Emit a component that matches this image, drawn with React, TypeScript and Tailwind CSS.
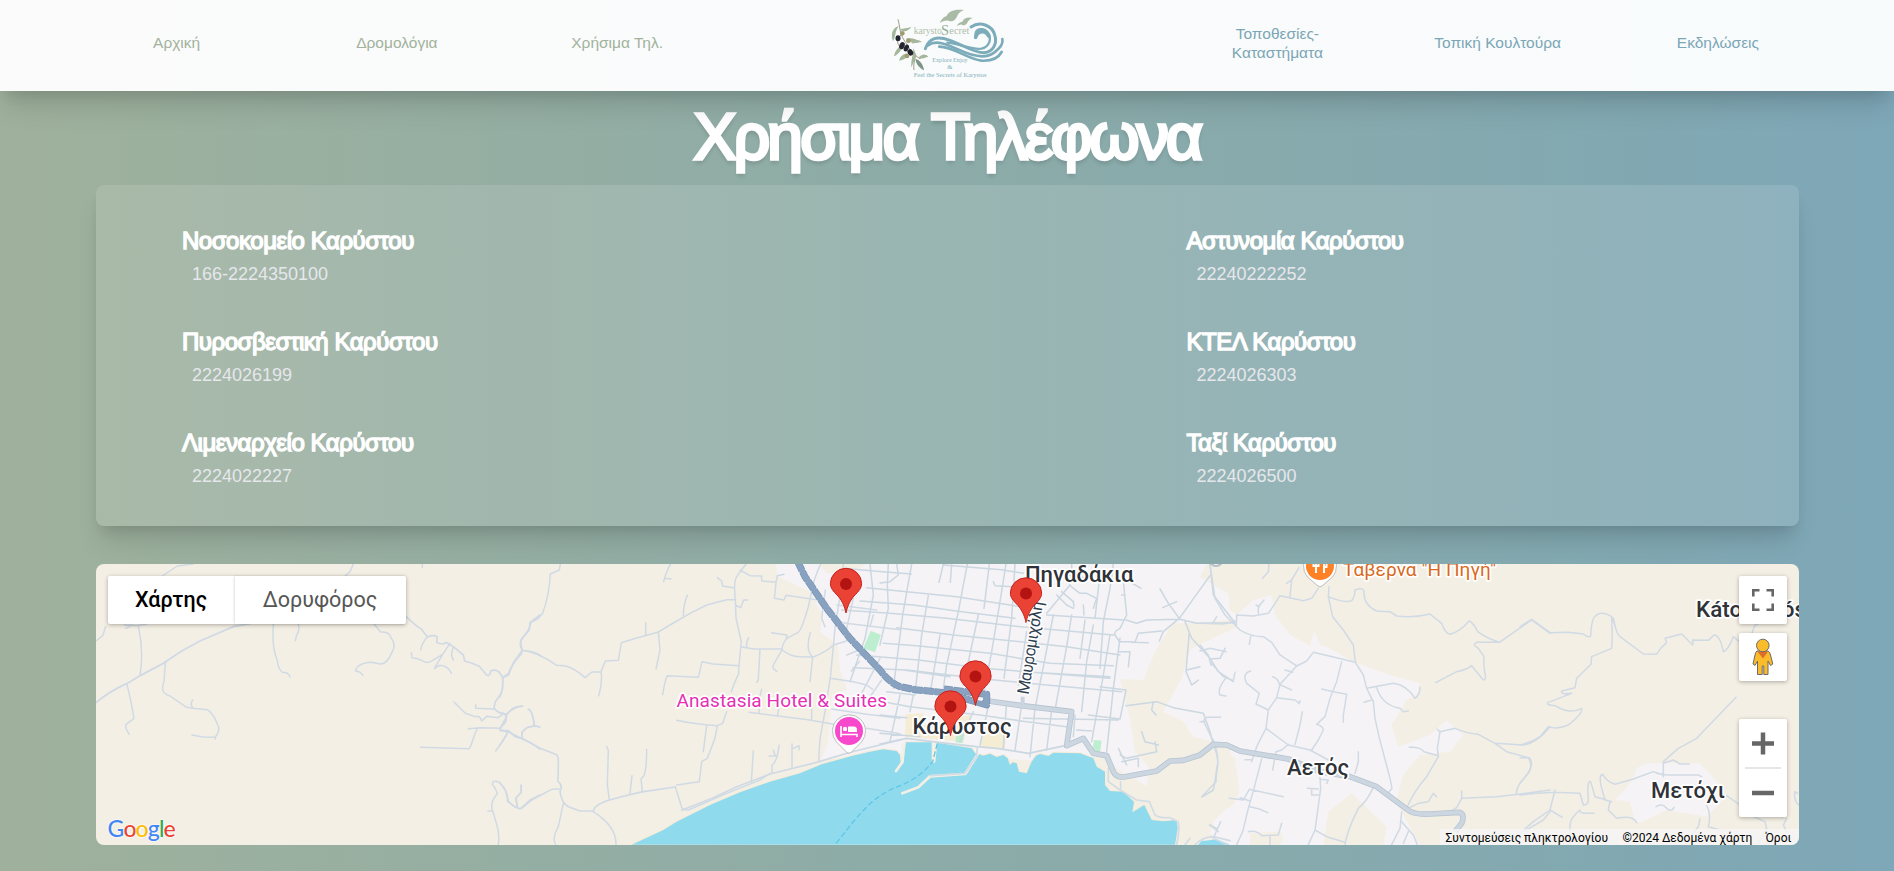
import React from "react";

const contactsLeft = [
  ["Νοσοκομείο Καρύστου", "166-2224350100"],
  ["Πυροσβεστική Καρύστου", "2224026199"],
  ["Λιμεναρχείο Καρύστου", "2224022227"],
];
const contactsRight = [
  ["Αστυνομία Καρύστου", "22240222252"],
  ["ΚΤΕΛ Καρύστου", "2224026303"],
  ["Ταξί Καρύστου", "2224026500"],
];

function Logo() {
  return (
    <svg width="150" height="91" viewBox="36 0 450 273" aria-label="Karystos Secret">
      <g fill="none" stroke="#7cacba" strokeLinecap="round">
        <path d="M196 146C208 112 232 108 270 121C312 136 340 158 372 158C402 156 412 128 404 104C396 76 360 62 333 81" strokeWidth="9" />
        <path d="M204 136C228 118 262 134 296 149C340 170 376 178 402 158C424 140 430 130 427 117" strokeWidth="8" />
        <path d="M238 140C280 140 320 176 364 182C396 184 416 172 425 156" strokeWidth="8" />
        <path d="M262 128C310 134 336 150 364 146C388 142 396 116 384 98C372 82 346 84 346 106" strokeWidth="7" />
        <path d="M347 112C352 92 376 88 386 108" strokeWidth="11" />
      </g>
      <g fill="#a9bba5">
        <path d="M239 68C246 56 252 50 260 48C264 34 284 26 312 30C300 34 294 40 290 52C284 64 274 66 266 62C256 60 248 64 239 68Z" />
        <path d="M290 78C294 70 300 66 307 65C312 54 324 50 338 54C330 57 326 61 322 68C316 76 310 77 306 74C300 73 296 76 290 78Z" />
      </g>
      <g fill="none" stroke="#8f8378" strokeWidth="2.5">
        <path d="M114 58C120 78 118 98 132 120C146 142 158 164 180 176M124 104C110 118 108 128 124 146M158 130C170 120 178 122 184 126M164 178C162 192 160 200 162 210M180 176C190 166 196 166 203 170" />
      </g>
      <g fill="#a4b79b">
        <path d="M116 78C96 84 92 104 99 124C108 108 104 96 116 78Z" />
        <path d="M118 88C132 84 142 86 154 80C144 94 132 98 118 88Z" />
        <path d="M140 116C154 112 168 116 182 126C166 132 150 130 140 116Z" />
        <path d="M128 134C114 140 104 154 102 169C116 162 126 150 128 134Z" />
        <path d="M142 160C126 162 118 174 118 182C132 180 142 174 142 160Z" />
        <path d="M160 144L170 168L154 202C152 182 160 164 160 144Z" />
        <path d="M166 176C180 180 190 194 192 211C178 204 168 192 166 176Z" fill="#7c9584" />
        <path d="M176 172C188 160 196 162 204 169C194 176 186 178 176 172Z" />
      </g>
      <g fill="#24242e">
        <ellipse cx="114" cy="115" rx="7.500" ry="9" />
        <ellipse cx="126" cy="137" rx="8" ry="11" transform="rotate(20 126 137)" />
        <ellipse cx="139" cy="144" rx="7" ry="11" transform="rotate(25 139 144)" />
        <ellipse cx="151" cy="157" rx="8" ry="10" transform="rotate(-30 151 157)" />
      </g>
      <g fill="#a09a70">
        <circle cx="127" cy="100" r="7" />
        <circle cx="145" cy="122" r="7" />
        <circle cx="141" cy="168" r="7" />
      </g>
      <g fontFamily="'Liberation Serif', serif">
        <text x="161" y="101" fontSize="28" fill="#aebdaa" textLength="84" lengthAdjust="spacingAndGlyphs">karysto</text>
        <text x="243" y="105" fontSize="46" fill="#8fae97" textLength="24" lengthAdjust="spacingAndGlyphs">S</text>
        <text x="268" y="101" fontSize="28" fill="#aebdaa" textLength="60" lengthAdjust="spacingAndGlyphs">ecret</text>
        <g fill="#82b0bd" fontSize="20">
          <text x="217" y="187" textLength="106" lengthAdjust="spacingAndGlyphs">Explore Enjoy</text>
          <text x="262" y="207">&amp;</text>
          <text x="161" y="230" textLength="219" lengthAdjust="spacingAndGlyphs">Feel the Secrets of Karystos</text>
        </g>
      </g>
    </svg>
  );
}

function Pin({ x, y }: { x: number; y: number }) {
  return (
    <g transform={`translate(${x} ${y})`}>
      <path
        d="M0 0C-1.2 -5.5 -3 -11 -8 -17C-13 -22 -15.6 -25 -15.6 -29.5A15.6 15.2 0 0 1 15.6 -29.5C15.6 -25 13 -22 8 -17C3 -11 1.2 -5.5 0 0Z"
        fill="#ea4335"
        stroke="#c5221f"
        strokeWidth="1"
      />
      <circle cx="0" cy="-29" r="6" fill="#b31412" />
    </g>
  );
}

function Label({ x, y, w, children }: { x: number; y: number; w: number; children: React.ReactNode }) {
  return (
    <text x={x} y={y} textLength={w} lengthAdjust="spacingAndGlyphs" fontSize="22" fontWeight="500" fill="#2f3237" stroke="#fff" strokeWidth="3.5" strokeLinejoin="round" paintOrder="stroke">
      {children}
    </text>
  );
}

const mainRoad =
  "M325 438L425 452L575 470L560 572L610 550L640 595L680 602L700 650Q710 670 735 665L830 648L870 618L910 616L960 600L1000 568L1040 570L1080 588L1225 612L1320 650L1410 665L1490 695L1580 762Q1600 780 1650 777L1740 772Q1755 780 1745 805L1725 830";
const highway = "M-247 20L-225 65L-160 160L-90 250L0 345Q30 385 60 395L105 404L195 413L320 450V418L192 402";

function MapDrawing() {
  return (
    <svg className="block h-full w-full" viewBox="96 564 1703 281" preserveAspectRatio="none" fontFamily="Roboto, sans-serif">
      <rect x="96" y="564" width="1703" height="281" fill="#f4efe4" />

      {/* built-up areas */}
      <g fill="#f5f3f5">
        <path d="M776 560L777 576L810 592L823 616L820 632L838 645L840 670L847 690L832 695L828 742L821 760L880 752L1110 765L1250 845H1420L1395 800L1280 560Z" />
        <path transform="translate(1200 555) scale(.33333)" d="M-100 27L25 27L85 115L90 165L110 180L160 135L215 120L225 180L270 240L335 272L380 275L460 320L570 360L660 385L650 420L620 435L575 510L595 575L690 540L740 495L790 540L750 590L660 600L610 660L595 710L590 760L655 869L-100 869Z" />
        <path transform="translate(1520 555) scale(.33333)" d="M380 625H430L540 625L610 700L615 730L560 785L440 765L370 800L345 803L330 740L285 735L335 680L350 640Z" />
      </g>
      <g fill="#f4efe4">
        <path transform="translate(500 555) scale(.33333)" d="M960 27H1100L1060 50L980 55Z" />
        <path transform="translate(1200 555) scale(.33333)" d="M25 20H400L330 272L270 240L225 180L215 120L160 135L110 180L90 165L85 115L40 90L0 65Z" />
        <path transform="translate(1200 555) scale(.33333)" d="M-80 205L90 205L110 215L0 268L-40 290ZM0 550L40 560L105 610L118 710L100 750L40 790L25 830L60 860L0 869ZM455 715L560 815L550 869H370L385 770ZM150 835L240 830L250 850L240 869H150Z" />
        <path transform="translate(880 555) scale(.33333)" d="M875 210L1050 195V228L935 265L905 370L850 470L910 500L940 545L1050 580V760L980 840L1050 869H880L900 800L830 785L760 735L690 705L640 605L690 610L715 690L798 700L810 640L765 590L750 490L720 372L790 375L825 290Z" />
      </g>
      <path transform="translate(880 555) scale(.33333)" d="M1000 800L1040 760H1110V869H1020Z" fill="#f5f3f5" />
      <g fill="#f4ecd3" transform="translate(880 555) scale(.33333)">
        <path d="M78 478L130 475V510L270 480L268 500L250 560L75 545ZM310 520L380 525L375 580L300 575Z" />
      </g>
      <g fill="#bdeed0" transform="translate(880 555) scale(.33333)">
        <path d="M230 535L252 537L248 565L226 562ZM642 555L665 557L660 592L638 586ZM-28 227L3 240L-15 292L-50 280Z" />
      </g>

      {/* sea */}
      <g transform="translate(880 555) scale(.33333)">
        <path
          d="M-745 869L-700 848L-650 825L-610 800L-510 750L-420 712L-330 680L-240 655L-175 628L-85 603L-30 590L10 583L50 588L60 600L62 625L48 650L70 625L78 562L155 562V620L166 622L172 563L275 580L290 600L255 655L150 662L115 697L65 716L115 700L155 665L260 658L298 598L310 602L330 596L350 606L370 600L383 610L390 630L398 622L410 625L417 650L440 655L455 620L468 602L480 597L505 603L520 593L600 595L640 610L650 635L675 650V690L690 708L730 710L762 740L757 772L793 750L815 795L850 799L890 795L893 820L885 869Z"
          fill="#90daee"
          stroke="#f6ecd9"
          strokeWidth="7"
          strokeLinejoin="round"
          paintOrder="stroke"
        />
        <path d="M950 872L970 858L1010 853L1050 869ZM955 869L965 857H1000L1040 872Z" fill="#90daee" />
        <path d="M70 568L68 620L48 648M165 565L161 620M290 603L255 657L150 664L115 697L67 715" fill="none" stroke="#f4efe4" strokeWidth="8" strokeLinejoin="round" strokeLinecap="round" />
        <path d="M172 565L158 620C110 680 60 690 30 705C-20 730 -50 765 -80 800L-135 869" fill="none" stroke="#5cc8e6" strokeWidth="4" strokeDasharray="17 8" />
      </g>

      {/* minor roads, west */}
      <g fill="none" stroke="#d0dae4" strokeWidth="4.5" strokeLinejoin="round" strokeLinecap="round">
        <g transform="translate(90 555) scale(.33333)">
          <path d="M18 443Q60 408 110 386L152 361L220 325L275 288L330 258L430 215L480 206" strokeWidth="5.5" />
          <path d="M217 63L262 33L310 27M766 63L780 50L790 27M997 20V38M18 258L38 242L47 215M103 210L140 212L170 208M145 212Q162 290 150 361M107 220L130 210M110 386Q122 430 132 490L108 508Q104 518 118 538M226 322Q224 350 222 380Q208 415 240 423L290 457L308 460M308 434L303 446L308 460L352 464C368 474 375 490 386 516Q388 532 376 546V553M306 540L340 546L374 547" />
          <path d="M550 207Q545 280 562 315Q563 340 577 352Q596 352 600 366M625 207Q630 225 620 240L616 257M852 207L872 231Q898 230 901 245Q920 270 907 290Q890 330 870 327L845 322Q800 325 797 348Q812 350 819 361" />
          <path d="M948 184Q980 215 994 222L1012 246Q1030 238 1042 245L1040 262Q1058 272 1068 262L1090 275L1120 300L1124 318Q1150 325 1168 334L1190 360Q1200 366 1202 348Q1225 338 1238 368L1256 360Q1262 330 1295 295L1296 286Q1286 265 1296 250L1318 225L1320 203L1350 180" strokeWidth="5" />
          <path d="M1012 246Q995 265 992 285M964 293L966 308Q985 310 996 317Q1012 328 1030 315L1058 298L1080 265M1058 298L1033 341L1048 331Q1075 332 1084 355M1090 278Q1080 300 1090 315M1296 286Q1335 290 1352 302" />
          <path d="M1238 368Q1240 395 1234 415L1216 440L1212 458Q1218 473 1246 477Q1253 490 1244 505L1229 520Q1238 530 1255 530L1290 548L1325 565L1350 582" strokeWidth="5" />
          <path d="M1092 441L1126 475L1155 485Q1170 480 1175 498L1190 484L1224 488L1238 478M1157 449L1157 460L1212 462M1135 521L1170 518L1229 520M1162 521C1150 540 1150 560 1138 581L992 577M1255 530Q1240 560 1217 588M1250 480Q1268 450 1298 454M1315 463Q1328 465 1333 512L1310 518L1296 532V548M1333 512L1350 516" />
          <path d="M1225 869Q1230 835 1218 800L1207 765Q1200 740 1222 716Q1216 697 1208 690Q1205 672 1228 682Q1255 710 1252 738Q1268 755 1290 762L1320 735L1350 720M1194 768H1208M1294 691V712L1278 730L1282 755" />
        </g>

        {/* minor roads, centre-west */}
        <g transform="translate(500 555) scale(.33333)">
          <path d="M181 27L178 45L151 57Q148 120 128 175L115 190L93 203L85 225L62 258L66 286L42 320L25 355L8 367V400L0 425M66 286Q110 290 170 331L195 332Q225 340 255 368L276 351L303 350L316 318L355 316L364 263L400 252L475 231L515 207L570 175L620 150L680 134H706M437 203V240M475 231L480 285L468 342M550 182Q550 150 562 121M303 350Q308 380 296 422M488 419Q495 375 502 362L595 367L606 320L640 327L716 332M780 283L775 370Q775 380 770 382M512 27Q500 45 491 80M494 70L513 72M652 68L665 78L668 93L702 98" />
          <path d="M738 27L710 65Q700 80 706 134L708 190L724 260L716 340L716 356L703 385L694 410M706 150L722 158L731 135H743M724 275Q760 283 780 282L845 281M740 275Q740 255 746 248M720 45L750 62L785 63V78L828 82L832 62L852 58M828 82L823 130L852 135L858 121L960 136M962 27Q940 75 935 110L925 155Q905 225 895 232L860 250Q845 270 847 283L820 330Q815 340 831 350M815 233L860 240V252M847 285Q870 305 900 305L940 306Q980 290 1000 270L1040 258M931 233Q915 285 938 306L930 380M976 105L965 190L975 215" />
          <path d="M530 496Q580 508 652 512L668 505L680 470M785 403L776 440L778 476M748 472L930 495L1000 508M840 445L832 482M935 410V495M652 512L645 550L622 610L605 620L598 680L530 690M620 512L610 590M320 575L325 585L322 690L328 735M396 662L390 715M440 583Q440 640 432 662L423 672L427 710M526 696L543 750Q545 767 565 765L680 715L780 675L810 655M760 588L754 680M837 571Q832 620 816 630V655M807 603H830M820 585L826 603M876 567V637M880 580L897 572V584" />
          <path d="M0 527H25L45 545L70 552L120 580L165 597Q176 600 175 620L174 680Q190 690 180 710Q185 745 205 755L240 768H280M280 770Q280 750 328 735L390 719L430 710L526 696M545 766L640 728L710 695L810 657L950 622L1050 592L1200 555" strokeWidth="5" />
          <path d="M280 770Q350 815 348 869M190 745L175 815Q155 850 167 869M0 685Q20 700 25 738Q50 765 65 760L95 735L155 703L178 702M63 691V712L47 730L52 755M0 520L20 485L10 475H0M20 477Q45 455 68 454M85 463Q97 465 103 512L80 518L66 532V548M103 512L117 515M0 570L25 530" />
          <path d="M1030 27L1022 110L1005 220L992 360L975 470L960 550L956 620M1060 130L1040 220M990 370L1060 380L1100 390L1118 403M995 462L1100 478L1200 490M1000 200L1200 224M1100 520L1200 536M1010 150L1130 165M1040 300L1078 285M1054 348L1078 320M1120 180L1110 215M1140 310L1085 415L1060 460M1145 375L1100 440" />
        </g>

        {/* town street grid */}
        <g transform="translate(880 555) scale(.33333)" stroke="#cbd7e1" strokeWidth="4.5">
          <path d="M-110 40L-20 48L94 57M-40 98L230 125L420 155M-60 138L100 150L245 170L405 190M-115 165L30 175L200 190L430 216L700 240M50 218L220 240L420 260L560 275L720 300M10 265L110 272L330 295L510 325L700 332M-70 300L115 315L310 340L690 370M-80 338L80 345L290 370L500 390L725 410M20 410L105 420M70 345L210 365M190 30L365 44L430 55M340 80L345 92L400 95M500 180L730 195M430 350L690 365" />
          <path d="M-30 27L-20 120L-45 250L-90 380M50 27L55 60L30 80L0 84M25 27L22 90L25 160L0 270M95 27L68 180L40 400M145 122L125 240L105 415M190 27L177 82M215 27L211 82M262 27L235 170L200 330L190 400M328 27L312 160M378 27L360 140L335 290L310 420M295 180L250 390M405 27L395 190L372 370M520 180L495 310L465 460M575 180L560 275L525 465M615 195L600 310M640 210L620 320L605 470M690 240L665 390L635 560M180 240L152 405M440 230L415 390M700 27L690 100L670 200L660 340M658 75L645 190M610 150L612 180M720 250L700 400L680 590" />
          <path d="M280 470L240 560M380 440L370 580M425 450L405 585M465 460L450 605M515 465L500 585M330 430L300 570M60 420L30 560M100 420L90 470M-20 435L90 455L300 480L440 500L560 515M0 480L80 488M0 535L120 545M430 490L715 495M585 480L580 545M590 525L635 528M625 480L720 492L738 405L660 395M738 452L830 440L880 458L970 475L990 530L1000 570" />
          <path d="M500 175L570 90L560 60M575 27V60M570 92L600 115H620L650 130L640 160M545 110L580 140L582 155M530 120L560 150L580 160M560 60L660 75H740L783 100M730 75L735 130L740 180L720 220Q700 230 705 240L718 260H750L765 262L775 235L845 228M735 120H725M738 195L770 205L800 195L900 193L950 205L1070 203M840 102L865 145L898 190L990 62M848 158L890 140M898 190L850 230L838 258M915 200L935 250L990 310L1015 350L1060 380M928 230L918 350L935 390Q950 380 955 375M990 312L1020 310L1035 280M920 345L960 335M990 27L1000 120L1070 210M755 262L805 263M718 290H750L745 335" />
          <path d="M715 580L740 630M720 600L740 610L830 590L825 560M725 620L775 610V635M785 530L795 560L835 570M820 440L815 465L828 480M1000 570Q1020 610 1010 650L1000 705L968 725" />
          <path d="M0 567L80 550L175 562L290 575L350 580L445 595L555 572" strokeWidth="5" />
          <path d="M292 576L290 605L255 655L150 662M685 640L685 680L720 705L770 735L808 740L825 780Q840 790 870 788L895 800Q900 820 890 869M722 680V705M915 869L930 850M945 869Q970 845 1000 845L1050 857M1015 830L990 810" strokeWidth="5" stroke="#d3dce4" />
        </g>

        {/* minor roads, east */}
        <g transform="translate(1200 555) scale(.33333)">
          <path d="M30 27L45 130L75 180L120 225Q150 245 190 245L215 262L240 300L290 333M0 205L70 207L110 197V180L160 183L205 175L225 145L240 122L310 137L335 130L355 100M207 27L205 50L188 70M297 38L275 75L270 125M260 85L275 75M192 135L175 155V175M168 150L178 155M50 185L38 205M152 245L148 268M387 95L385 125L398 185L430 225L460 270L466 322M385 125Q430 145 455 137Q465 125 465 105Q490 95 492 110Q490 150 530 168L570 170L590 183Q640 190 690 177L725 205Q735 235 750 238Q780 230 808 197Q825 210 833 230Q860 250 898 262L995 195L1050 235M895 262H830Q815 270 835 280L852 305Q850 330 855 355Q860 375 850 375L815 332Q800 345 770 350L707 383" />
          <path d="M466 322L340 292L320 318L290 333L240 388L230 428L205 465L198 520L170 575L155 620M198 520L265 570L330 585L385 615M466 322L490 360L500 400L520 440L525 490L537 545L570 670L576 700L560 720M425 320L410 380L390 430L375 485L350 508Q370 515 370 525L355 555L335 585M500 400L580 385Q620 390 645 430Q660 420 660 397M530 397Q545 450 600 460L610 470L625 468M492 442L515 435M365 402L400 410L440 418L430 480V502M307 470L300 510L285 568M230 428L285 435L298 445L300 437M255 345L278 352M218 365Q235 370 238 388L275 405M152 348Q125 355 140 385L178 415L168 447L205 465M78 290L30 280L0 288M30 320L70 365L100 377L105 352M78 368Q50 405 60 420L78 423M0 270L25 300L33 330M62 487H20L10 497L38 555M0 500H15" />
          <path d="M265 568L245 585L228 590L218 645M135 614H155M475 590V620L465 655M520 697Q500 740 475 760Q440 830 435 869M360 665L362 700L350 790L345 825L325 869M362 673L385 675L380 685M322 700L355 702M355 720H335V705M185 612L162 700L145 760L128 830L110 869M88 730L130 735L148 703L250 725M150 755L178 762L203 773M120 728L150 738M145 830Q170 825 185 842L235 840L245 805M210 842V869M345 825L380 845L435 862M62 800L40 850L80 869M28 810L50 820M605 770L600 820L575 869M605 800L640 840L652 869M625 830L610 865" />
          <path d="M620 760Q640 710 680 665L715 605L712 580L720 530L712 523M720 530L765 520Q800 535 835 538L885 565L970 570Q1010 565 1050 515M628 577Q660 575 672 590L715 602M885 565L920 590L985 608Q1000 635 985 655Q945 695 950 718M620 762L655 745L685 740L700 715L710 725M750 770L770 758L785 730L890 725L960 717L1050 705M785 730V708M900 869L970 830L1030 795L1050 770M40 555Q60 610 50 640L48 680L5 725" />
        </g>
        <g transform="translate(1520 555) scale(.33333)">
          <path d="M0 215L35 193L90 233L145 232L190 237Q205 250 212 243Q215 190 225 185Q240 165 275 185L285 210M275 185Q278 240 275 280L215 305L213 328L170 370L165 398L125 408Q120 420 155 415L85 442Q75 450 105 452Q150 480 185 460Q190 475 145 510Q110 525 85 515L60 545Q30 565 0 570M280 190Q290 240 300 245L370 297L410 298L422 280L440 263L435 250L485 237L518 270V255L565 256L582 240Q600 240 610 290Q625 285 640 245L655 258" />
          <path d="M648 427L605 472L530 550L475 580L430 620V665M410 655L440 660L535 660L545 665M430 625L460 615L480 627H508M430 660L400 650L340 672L285 688Q260 680 248 658Q235 660 245 700L255 735L275 740M270 738L265 765L290 790Q340 780 350 803M260 735L225 725L212 680Q200 675 205 735Q205 750 190 750L180 715L105 712L50 715L0 720M105 705L90 765L40 800L0 835M180 765Q150 790 150 810V869M180 770L190 775H222M90 765L127 787M0 608L28 608Q50 630 0 685M408 755Q425 745 435 755Q455 775 462 757M540 792L535 815L515 840M560 750Q575 780 565 815L600 825M620 722L660 750L690 780L735 800L740 820L715 865M800 790L790 810L800 830M836 750Q820 735 825 710L833 715M695 237L705 210L715 207" />
        </g>
      </g>

      {/* main road */}
      <g fill="none" strokeLinejoin="round" transform="translate(880 555) scale(.33333)">
        <path d={mainRoad} stroke="#b7c4d2" strokeWidth="17" />
        <path d={mainRoad} stroke="#cbd6e0" strokeWidth="12" />
        <path d="M428 425V450" stroke="#c9d4df" strokeWidth="12" />
        <path d={highway} stroke="#7592b5" strokeWidth="21" strokeDasharray="30 3" />
        <path d={highway} stroke="#88a2bf" strokeWidth="17" />
        <path d="M278 427L307 430V438L278 433Z" fill="#f5f3f5" />
      </g>

      {/* place names */}
      <text x="676.5" y="707" textLength="210.5" fontSize="19" fill="#e52fb4" stroke="#fff" strokeWidth="3.5" strokeLinejoin="round" paintOrder="stroke">Anastasia Hotel &amp; Suites</text>
      <text x="1343" y="575.5" textLength="153" fontSize="19" fill="#d9691d" stroke="#fff" strokeWidth="3.5" strokeLinejoin="round" paintOrder="stroke">Ταβέρνα "Η Πηγή"</text>
      <Label x={1025} y={582} w={108.5}>Πηγαδάκια</Label>
      <Label x={912.5} y={734} w={99}>Κάρυστος</Label>
      <Label x={1287} y={775} w={62}>Αετός</Label>
      <Label x={1651} y={797.5} w={74}>Μετόχι</Label>
      <Label x={1696} y={617} w={110}>Káto Aetós</Label>
      <text transform="translate(1028.5 695) rotate(-81)" textLength="94" fontSize="16.5" fill="#2f3f52" stroke="#fff" strokeWidth="3" strokeLinejoin="round" paintOrder="stroke">Μαυρομιχάλη</text>

      {/* points of interest */}
      <g transform="translate(849 731)">
        <path d="M2 21.500Q0 23 -2 21.500L-12.500 11A16.500 16.500 0 1 1 12.500 11Z" fill="#fff" stroke="#b5b5b5" strokeWidth=".9" />
        <circle r="14" fill="#f849cc" />
        <path d="M-8 -5V6M-8 3.5H8V6" fill="none" stroke="#fff" strokeWidth="1.6" />
        <circle cx="-4" cy="-2" r="2.2" fill="#fff" />
        <path d="M-1 -4.500H5Q8 -4.500 8 -1V1H-1Z" fill="#fff" />
      </g>
      <g transform="translate(1320 566)">
        <path d="M2 20Q0 21.500 -2 20L-12.500 11A16.500 16.500 0 1 1 12.500 11Z" fill="#fff" stroke="#b5b5b5" strokeWidth=".9" />
        <circle r="14" fill="#ff8126" />
        <path d="M-4 -6V7M-6.500 -6V0H-1.500V-6M4 7V-6Q7 -4 6.500 1H4" fill="none" stroke="#fff" strokeWidth="2" />
      </g>
      <circle cx="1216" cy="559" r="7" fill="#f4efe4" stroke="#b7c1c9" strokeWidth="2" />

      <Pin x={846} y={613} />
      <Pin x={1026} y={622.500} />
      <Pin x={975.5} y={705.500} />
      <Pin x={950.5} y={735.500} />
    </svg>
  );
}

function Google() {
  return (
    <div className="absolute bottom-[4px] left-[12px] flex font-[Lato,sans-serif] text-[23px] leading-[26px] font-medium tracking-[-0.9px] [text-shadow:0_0_2px_#fff,0_0_2px_#fff]">
      <span className="text-[#4285f4]">G</span>
      <span className="text-[#ea4335]">o</span>
      <span className="text-[#fbbc04]">o</span>
      <span className="text-[#4285f4]">g</span>
      <span className="text-[#34a853]">l</span>
      <span className="text-[#ea4335]">e</span>
    </div>
  );
}

function Contacts({ items }: { items: string[][] }) {
  return (
    <div className="flex flex-col gap-[34.8px]">
      {items.map(([name, phone]) => (
        <div key={name}>
          <h3 className="text-[24px] leading-[36px] font-normal tracking-[-0.46px] text-white [-webkit-text-stroke:1.4px_white]">{name}</h3>
          <p className="pl-[10px] text-[18px] leading-[30px] text-gray-200">{phone}</p>
        </div>
      ))}
    </div>
  );
}

export default function App() {
  const nav = "flex items-center justify-center px-8 text-center text-[15.5px] leading-[19px] whitespace-nowrap";
  return (
    <div className="h-[871px] w-full overflow-hidden bg-[linear-gradient(to_right,#9fb19c_0%,#8eaca7_45%,#81a8b2_88%,#7ea7b8_100%)] font-['Liberation_Sans',Arial,sans-serif]">
      <header className="relative grid h-[91px] grid-cols-8 bg-linear-to-r from-[#fbfbfb] to-[#f8fbfc] px-[66px] shadow-[0_20px_25px_-5px_rgba(0,0,0,0.12),0_8px_14px_-6px_rgba(0,0,0,0.12)]">
        <a className={`${nav} text-[#a1b29d]`}><span className="-mt-[7px] pl-[1px]">Αρχική</span></a>
        <a className={`${nav} text-[#a1b29d]`}><span className="-mt-[7px] pl-[1px]">Δρομολόγια</span></a>
        <a className={`${nav} text-[#a1b29d]`}><span className="-mt-[7px] pl-[1px]">Χρήσιμα Τηλ.</span></a>
        <div className="col-span-2 flex justify-center"><Logo /></div>
        <a className={`${nav} text-[#7ba6b5]`}><span className="-mt-[5px]">Τοποθεσίες-<br />Καταστήματα</span></a>
        <a className={`${nav} text-[#7ba6b5]`}><span className="-mt-[7px]">Τοπική Κουλτούρα</span></a>
        <a className={`${nav} text-[#7ba6b5]`}><span className="-mt-[7px]">Εκδηλώσεις</span></a>
      </header>

      <main className="mx-auto w-[1703px]">
        <h1 className="h-[94px] pt-[10px] text-center text-[64px] leading-[72px] font-normal tracking-[-2.7px] text-white [-webkit-text-stroke:3.4px_white] [text-shadow:0_4px_4px_rgba(0,0,0,0.16)]">
          Χρήσιμα Τηλέφωνα
        </h1>
        <section className="grid h-[341px] grid-cols-[1004.500px_1fr] rounded-lg bg-white/12 pt-[38px] pl-[86.5px] shadow-[0_20px_25px_-5px_rgba(0,0,0,0.12),0_8px_14px_-6px_rgba(0,0,0,0.12)]">
          <Contacts items={contactsLeft} />
          <Contacts items={contactsRight} />
        </section>

        <section className="relative mt-[38px] h-[281px] overflow-hidden rounded-lg font-[Roboto,sans-serif]">
          <MapDrawing />
          <div className="absolute top-[12px] left-[12px] flex h-[48px] rounded-[2px] bg-white text-[21.5px] shadow-[0_1px_4px_rgba(0,0,0,0.3)]">
            <div className="flex w-[127px] items-center justify-center font-medium text-black">Χάρτης</div>
            <div className="flex w-[171px] items-center justify-center text-[#565656] shadow-[-1px_0_2px_rgba(0,0,0,0.12)]">Δορυφόρος</div>
          </div>
          <Google />
          <div className="absolute top-[12px] right-[12px] flex w-[48px] flex-col">
            <div className="flex h-[48px] items-center justify-center rounded-[2px] bg-white shadow-[0_1px_4px_rgba(0,0,0,0.3)]">
              <svg width="22" height="22" viewBox="0 0 22 22" fill="none" stroke="#666" strokeWidth="2.6">
                <path d="M1.300 7.500V1.300H7.500M14.500 1.300H20.700V7.500M20.700 14.500V20.700H14.500M7.500 20.700H1.300V14.500" />
              </svg>
            </div>
            <div className="mt-[9px] flex h-[48px] items-center justify-center rounded-[2px] bg-white shadow-[0_1px_4px_rgba(0,0,0,0.3)]">
              <svg width="22" height="38" viewBox="0 0 22 38" fill="#fbbc2b" stroke="#6b6b6b" strokeWidth="1">
                <path d="M5 13H16Q18 14 18.500 17L20.800 26L18.500 27.500L16 23V36.500H11.800V28H10.200V36.500H5.500V23L3 27.500L1 26L3 17Q3.500 14 5 13Z" />
                <path d="M5.500 13.500H16L11 20.500Z" fill="#e06b2a" stroke="none" />
                <circle cx="10.800" cy="7.500" r="6.300" />
              </svg>
            </div>
            <div className="mt-[38px] flex h-[98px] flex-col items-center rounded-[2px] bg-white shadow-[0_1px_4px_rgba(0,0,0,0.3)]">
              <svg width="22" height="48" viewBox="0 0 22 48" stroke="#666" strokeWidth="4.500"><path d="M0 24.500H22M11 13.500V35.500" /></svg>
              <div className="h-[2px] w-[36px] bg-[#e6e6e6]" />
              <svg width="22" height="48" viewBox="0 0 22 48" stroke="#666" strokeWidth="4.500"><path d="M0 24H22" /></svg>
            </div>
          </div>
          <div className="absolute right-0 bottom-0 flex h-[16px] items-center bg-[#f5f5f5]/80 pt-[1px] text-[12px] leading-[16px] whitespace-nowrap text-black">
            <span className="w-[176px] pl-[6px]">Συντομεύσεις πληκτρολογίου</span>
            <span className="w-[144px] pl-[7px]">©2024 Δεδομένα χάρτη</span>
            <span className="w-[39px] pl-[6px]">Όροι</span>
          </div>
        </section>
      </main>
    </div>
  );
}
